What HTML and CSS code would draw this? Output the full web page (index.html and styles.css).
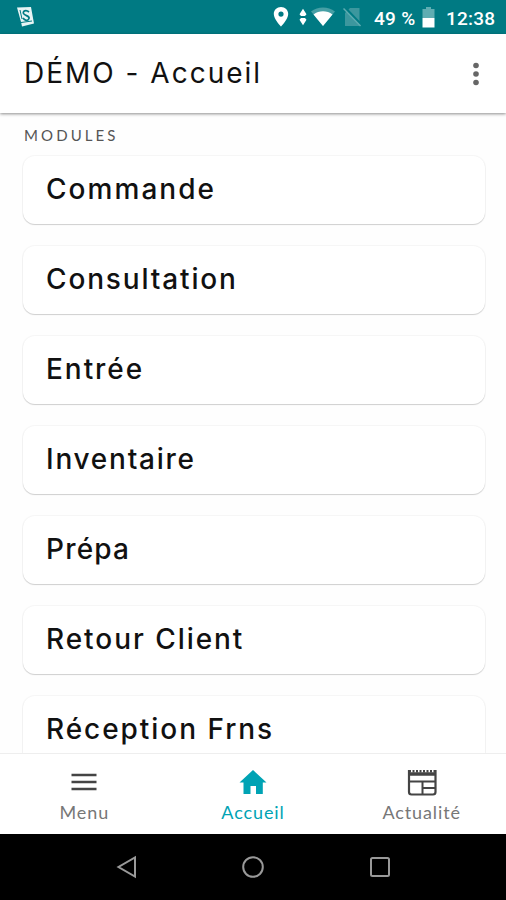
FILE: index.html
```html
<!DOCTYPE html>
<html lang="fr">
<head>
	<meta charset="UTF-8">
	<title>DÉMO - Accueil</title>
	<link rel="stylesheet" href="styles.css">
</head>
<body>
	<div id="phone">
		<!-- barre de statut -->
		<div class="status">
			<svg class="notif" width="20" height="22" viewBox="0 0 20 22">
				<path d="M1 1.500L15 1l3 16.500L6 20.500 5 16z" fill="#e8f4f4"/>
				<path d="M13 6C10 3.500 6.500 5 7.500 7.500S14 9.500 13 12.500 8.500 14.500 7 12" fill="none" stroke="#007a83" stroke-width="1.700"/>
				<path d="M4 4l2 9M5 16.500l11-1.500" fill="none" stroke="#007a83" stroke-width="1"/>
			</svg>
			<svg class="pin" width="16" height="22" viewBox="0 0 16 22">
				<path fill-rule="evenodd" d="M8 1C3.900 1 .8 4 .8 8c0 5.200 7.200 12.500 7.200 12.500S15.200 13.200 15.200 8C15.200 4 12.100 1 8 1zm0 4.500a2.600 2.600 0 1 1 0 5.200 2.600 2.600 0 0 1 0-5.200z" fill="#fff"/>
			</svg>
			<svg class="data" width="8" height="18" viewBox="0 0 8 18">
				<path d="M4 .8l3.500 5.500L6 8H2L.5 6.300zM4 17.200L.5 11.700 2 10h4l1.500 1.700z" fill="#fff"/>
			</svg>
			<svg class="wifi" width="24" height="20" viewBox="0 0 24 20">
				<path d="M0 4.500C7-.8 17-.8 24 4.500L12 19z" fill="#469fa5"/>
				<path d="M2.500 7.500C8 3.300 16 3.300 21.500 7.500L12 19z" fill="#fff"/>
			</svg>
			<svg class="sim" width="19" height="20" viewBox="0 0 19 20">
				<path d="M7 1h9.500v18H2V6z" fill="#3c979e"/>
				<path d="M1.500.5l17 18" stroke="#007a83" stroke-width="3"/>
				<path d="M.5 1.500l17 17.500" stroke="#5fadb2" stroke-width="1.500"/>
			</svg>
			<span class="percent">49 %</span>
			<svg class="battery" width="13" height="21" viewBox="0 0 13 21">
				<path d="M4 0h5v2h3.500v9H.5V2H4z" fill="#5fadb2"/>
				<path d="M.5 11h12v9.500H.5z" fill="#fff"/>
			</svg>
			<span class="clock">12:38</span>
		</div>

		<div class="header">
			<h1>DÉMO - Accueil</h1>
			<svg width="8" height="24" viewBox="0 0 8 24" fill="#666">
				<circle cx="4" cy="3.500" r="2.800"/>
				<circle cx="4" cy="12" r="2.800"/>
				<circle cx="4" cy="20.500" r="2.800"/>
			</svg>
		</div>

		<div class="content">
			<h2>MODULES</h2>
			<ul class="modules">
				<li class="commande">Commande</li>
				<li class="consultation">Consultation</li>
				<li class="entree">Entrée</li>
				<li class="inventaire">Inventaire</li>
				<li class="prepa">Prépa</li>
				<li class="retour">Retour Client</li>
				<li class="reception">Réception Frns</li>
			</ul>
		</div>

		<!-- onglets -->
		<div class="tabs">
			<div class="tab menu">
				<svg width="30" height="30" viewBox="0 0 30 30">
					<path d="M2.500 8h25M2.500 15h25M2.500 22h25" stroke="#444" stroke-width="2.500"/>
				</svg>
				<span>Menu</span>
			</div>
			<div class="tab active">
				<svg width="30" height="30" viewBox="0 0 30 30">
					<path d="M15 3l13.500 12.500h-3.700V27H18v-8h-5.500v8H5.500V15.500h-4z" fill="#00a3b4"/>
				</svg>
				<span>Accueil</span>
			</div>
			<div class="tab actu">
				<svg width="30" height="30" viewBox="0 0 30 30" fill="none" stroke="#444" stroke-width="2.200">
					<path d="M2 3v22q0 2.500 2.500 2.500h21.500q2.500 0 2.500-2.500V3"/>
					<path d="M2 7h26.500" stroke-width="3.500"/>
					<path d="M2 4.300h27" stroke-width="2.500" stroke-dasharray="2 1.500"/>
					<path d="M2 14.500h26.500M15.500 14.500v13M15.500 21h13" stroke-width="2"/>
				</svg>
				<span>Actualité</span>
			</div>
		</div>

		<!-- touches android -->
		<div class="keys">
			<div><svg width="24" height="24" viewBox="0 0 24 24"><path d="M20 2.500v19L3.500 12z"/></svg></div>
			<div><svg width="24" height="24" viewBox="0 0 24 24"><circle cx="12" cy="12" r="9.800"/></svg></div>
			<div><svg width="24" height="24" viewBox="0 0 24 24"><rect x="3" y="3" width="18" height="18" rx="1.500"/></svg></div>
		</div>
	</div>
</body>
</html>
```
FILE: styles.css
```css
*{margin: 0;padding: 0;box-sizing: border-box;}
#phone{
	width: 506px;
	height: 900px;
	display: flex;
	flex-direction: column;
	overflow: hidden;
	background: #fefefe;
	font-family: Inter, "Liberation Sans", sans-serif;
}
svg{
	display: block;
	flex: none;
}

/*barre de statut*/
.status{
	height: 34px;
	flex: none;
	display: flex;
	align-items: center;
	padding-left: 16px;
	background: #007a83;
	color: #fff;
	font: 500 19px/34px Roboto, sans-serif;
	white-space: nowrap;
}
.pin{
	margin-left: 237px;
}
.data{
	margin-left: 10px;
}
.wifi{
	margin-left: 4px;
}
.sim{
	margin-left: 8px;
}
.percent{
	width: 42px;
	margin-left: 12px;
	padding-top: 3px;
	letter-spacing: .3px;
}
.battery{
	margin-left: 6px;
}
.clock{
	margin-left: 11px;
	padding-top: 3px;
	letter-spacing: .2px;
}

.header{
	height: 79px;
	flex: none;
	display: flex;
	align-items: center;
	justify-content: space-between;
	padding: 0 26px 0 24px;
	background: #fff;
	box-shadow: 0 1px 3px rgba(0,0,0,.45);
	position: relative;
}
.header h1{
	font-size: 28px;
	line-height: 36px;
	font-weight: 400;
	letter-spacing: 2px;
	color: #111;
	padding-bottom: 2px;
}

.content{
	flex: 1;
	min-height: 0;
	overflow: hidden;
	padding: 12px 21px 0 23px;
}
.content h2{
	height: 20px;
	margin-bottom: 11px;
	padding-left: 1px;
	font: 400 15px/20px Lato, sans-serif;
	letter-spacing: 3.100px;
	color: #555;
}
.modules{
	display: flex;
	flex-direction: column;
	gap: 22px;
	list-style: none;
}
.modules li{
	height: 68px;
	flex: none;
	padding-left: 23px;
	border-radius: 12px;
	background: #fff;
	box-shadow: 0 0 1px 1px rgba(0,0,0,.035), 0 1px 1px rgba(0,0,0,.16);
	font-size: 28px;
	line-height: 67px;
	font-weight: 500;
	letter-spacing: 1.950px;
	color: #111;
}
.modules .commande{
	letter-spacing: 2.050px;
}
.modules .consultation{
	letter-spacing: 1.850px;
}
.modules .inventaire{
	letter-spacing: 1.750px;
}
.modules .prepa{
	letter-spacing: 1.200px;
}

/*onglets*/
.tabs{
	height: 81px;
	flex: none;
	display: grid;
	grid-template-columns: repeat(3, 1fr);
	border-top: 1px solid #eee;
	background: #fff;
	color: #777;
}
.tab{
	display: flex;
	flex-direction: column;
	align-items: center;
	padding-top: 13px;
	font: 400 18px/24px Lato, sans-serif;
	letter-spacing: .9px;
}
.tab span{
	margin-top: 3px;
}
.active{
	color: #00a3b4;
}

.keys{
	height: 66px;
	flex: none;
	display: grid;
	grid-template-columns: repeat(3, 126.500px);
	justify-content: center;
	background: #000;
}
.keys div{
	display: flex;
	align-items: center;
	justify-content: center;
}
.keys svg{
	fill: none;
	stroke: #999;
	stroke-width: 2;
}
```
